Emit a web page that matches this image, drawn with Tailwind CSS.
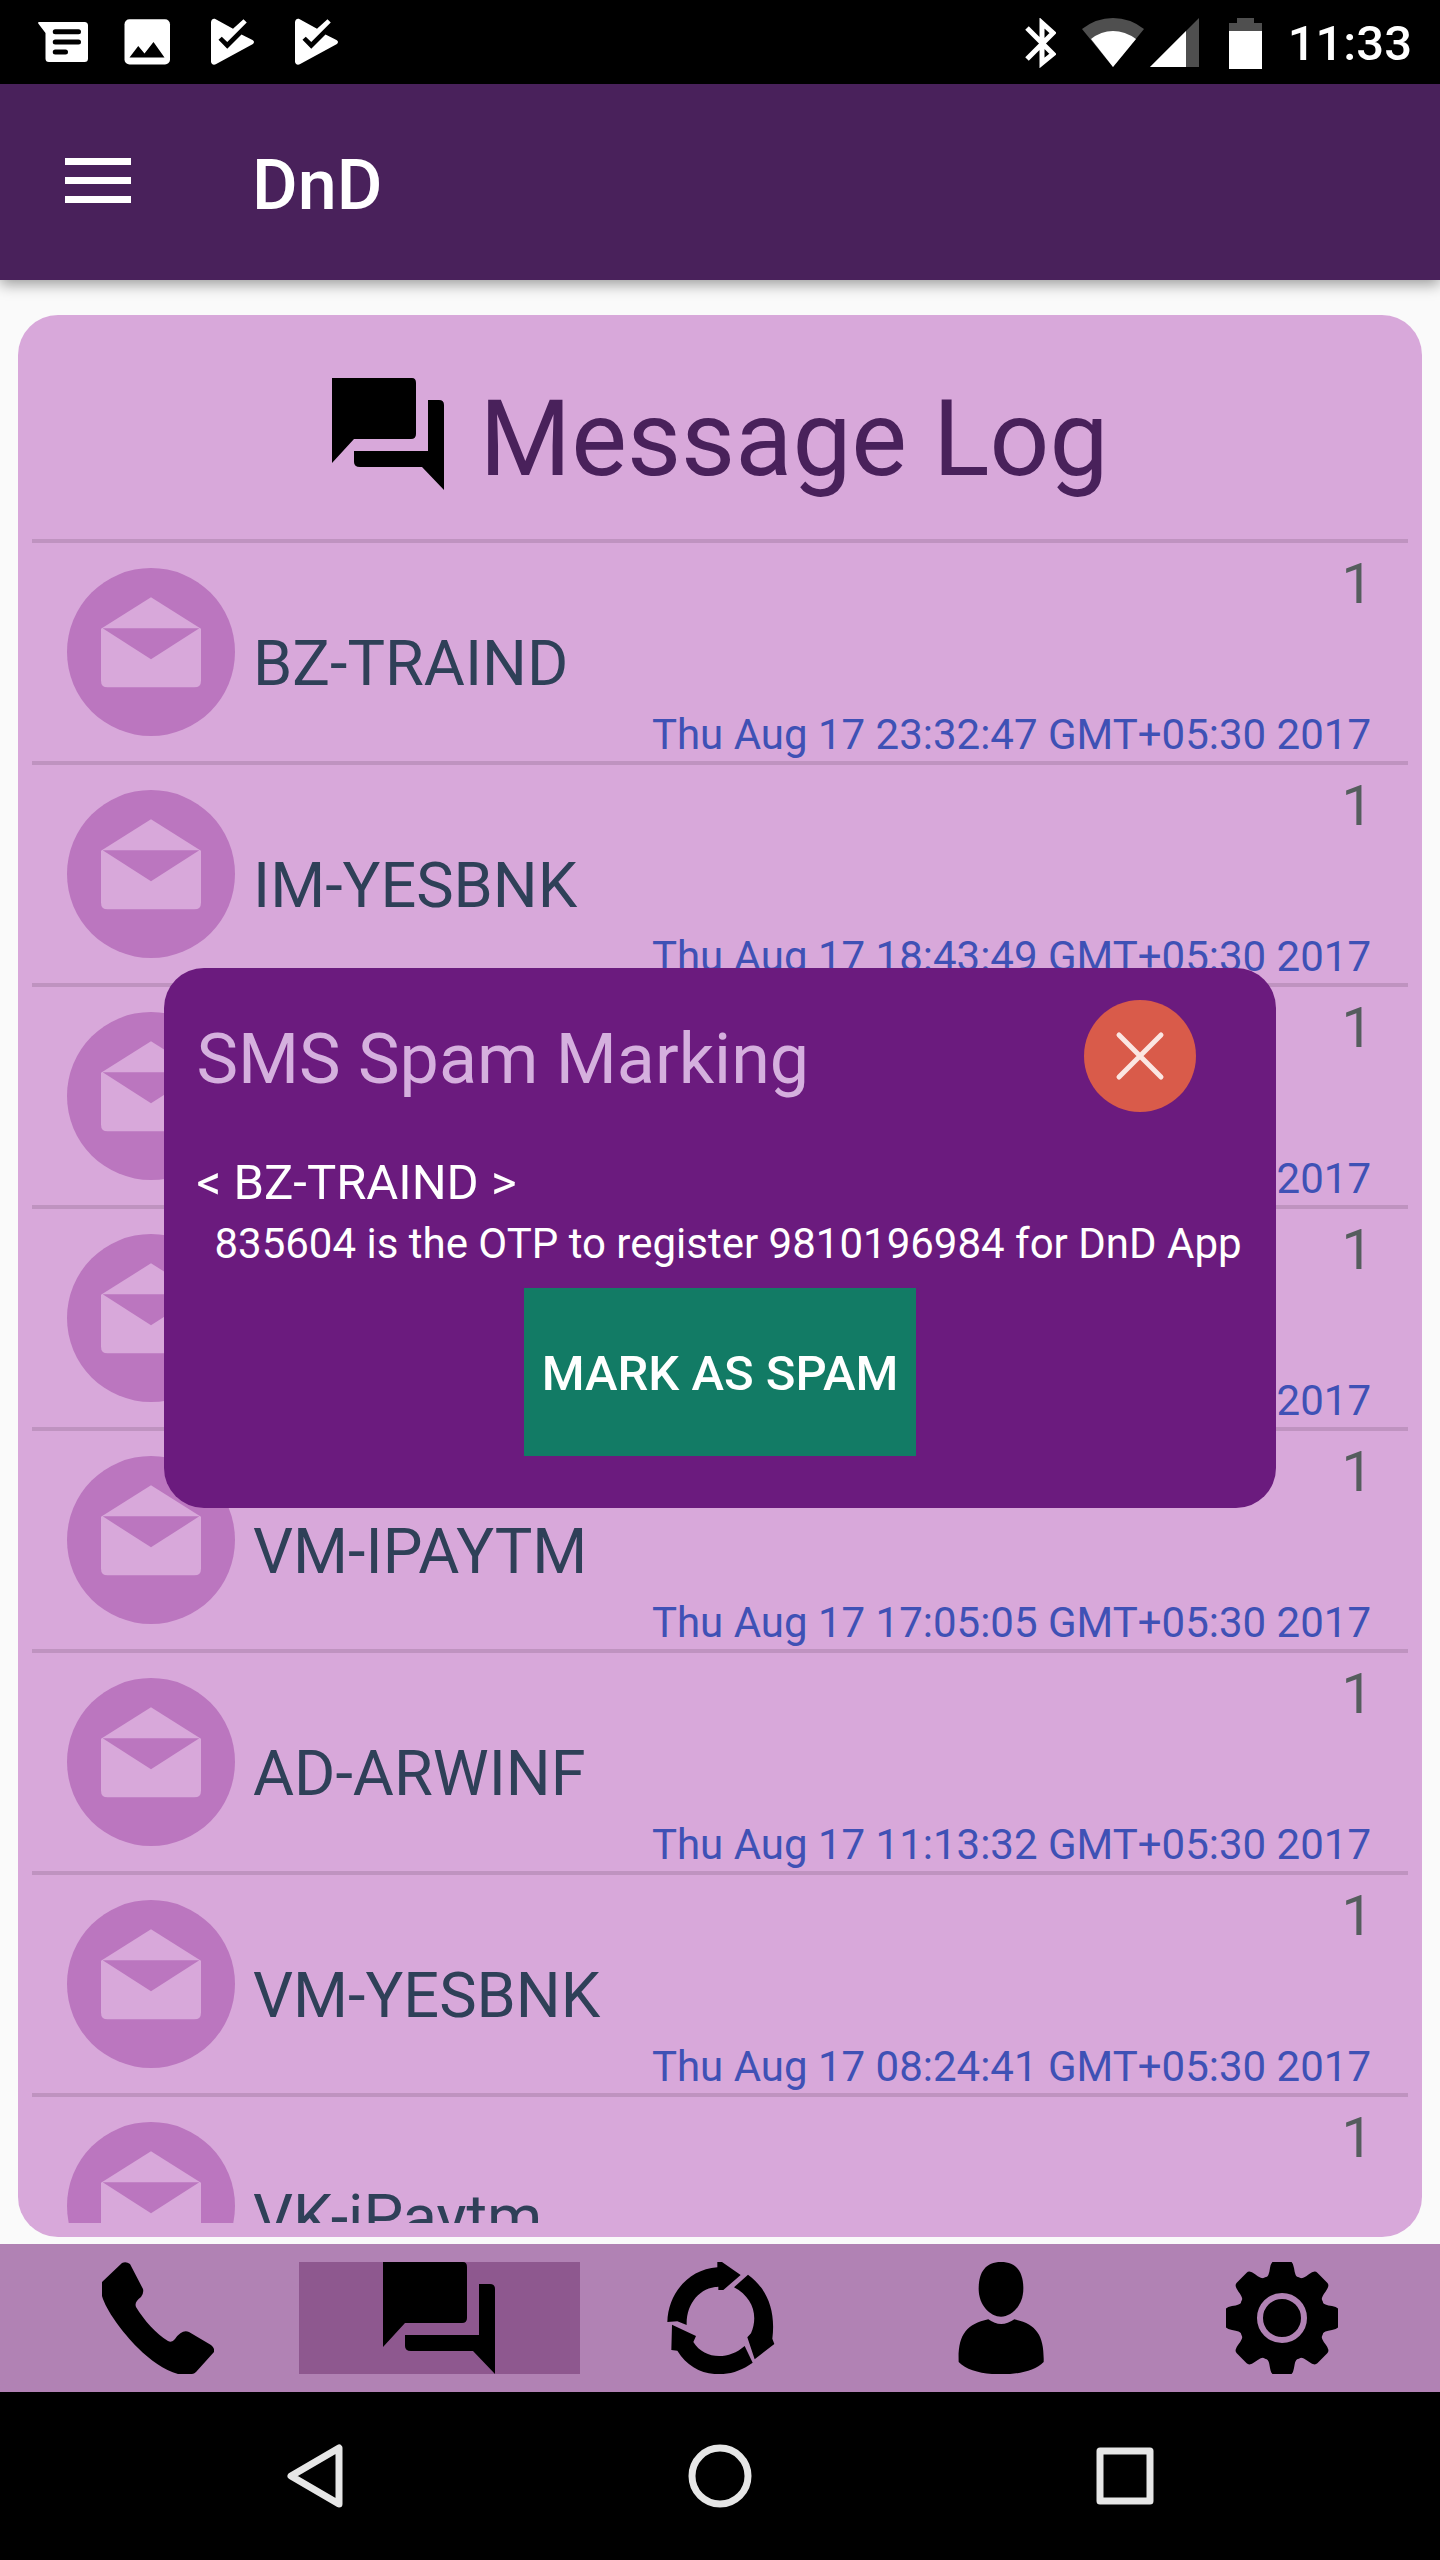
<!DOCTYPE html>
<html lang="en">
<head>
<meta charset="utf-8">
<meta name="viewport" content="width=device-width, initial-scale=1">
<title>DnD</title>
<script src="https://cdn.jsdelivr.net/npm/@tailwindcss/browser@4"></script>
</head>
<body class="flex h-screen flex-col overflow-hidden bg-[#fafafa] font-[Roboto,sans-serif]">

<!-- Shared icons -->
<svg class="hidden" aria-hidden="true">
  <symbol id="mail" viewBox="51 54 504 504">
    <circle cx="303" cy="306" r="252" fill="#bb76bf"/>
    <path d="M303 142L453 236V392Q453 412 433 412H173Q153 412 153 392V236Z" fill="#d8a8da"/>
    <path d="M158 235H448L303 328Z" fill="#bb76bf"/>
  </symbol>
  <symbol id="forum" viewBox="0 0 112 112">
    <path d="M0 0H80Q84 0 84 5V56Q84 61 79 61H22L0 85Z"/>
    <path d="M96 22H107Q112 22 112 27V112L90 89H28Q22 89 22 84V73H96Z"/>
  </symbol>
  <symbol id="play-check" viewBox="0 0 24 24">
    <path d="M4 4.2C4 3 5 2.4 5.9 2.9L12.8 6.7L17 2.9L18.3 4.2L10.5 12L8.3 9.9L7 11.1L10.5 14.7L16.2 9L20.6 11.2Q21.8 12 20.6 12.9L5.9 20.9C5 21.4 4 20.8 4 19.8Z"/>
  </symbol>
</svg>

<!-- Status bar -->
<header class="flex h-[84px] shrink-0 items-center justify-between bg-black pl-[33px] pr-[28px] text-white">
  <div class="flex items-center gap-6">
    <svg class="size-[60px]" viewBox="0 0 24 24" fill="currentColor"><path d="M2.3 4H20.6Q22 4 22 5.4V18.6Q22 20 20.6 20H6.4Q5 20 5 18.6V8.4L2.1 4.6Q1.9 4 2.3 4Z"/><path d="M8.9 7.9H18.2M8.9 12H18.2M8.9 16H13" stroke="#000" stroke-width="2" stroke-linecap="round"/></svg>
    <svg class="size-[60px]" viewBox="0 0 24 24" fill="currentColor"><rect x="3" y="2.9" width="18.2" height="18.1" rx="2"/><path d="M5 18.2L8.5 13.6L11 16.6L14.6 12L19 18.2Z" fill="#000"/></svg>
    <svg class="size-[60px]" fill="currentColor"><use href="#play-check"/></svg>
    <svg class="size-[60px]" fill="currentColor"><use href="#play-check"/></svg>
  </div>
  <div class="flex items-center pt-[2px]">
    <svg class="mr-[26px] h-[50px] w-[31px]" viewBox="0 0 31 50" fill="none" stroke="currentColor" stroke-width="5"><path d="M2 10L28 36L17 45V5L28 15L2 41"/></svg>
    <svg class="mr-[6px] h-[50px] w-[62px]" viewBox="0 0 62 50"><path d="M0 11Q14 0 31 0T62 11L31 49Z" fill="#4f4f4f"/><path d="M9 21Q19 13 31 13T54 21L31 49Z" fill="#fff"/></svg>
    <svg class="mr-[30px] h-[50px] w-[49px]" viewBox="0 0 49 50"><path d="M49 0V49H0Z" fill="#4f4f4f"/><path d="M36 13V49H0Z" fill="#fff"/></svg>
    <svg class="mr-[26px] h-[51px] w-[33px]" viewBox="0 0 33 51"><path d="M8 0H25V5H33V14H0V5H8Z" fill="#4f4f4f"/><path d="M0 13H33V51H0Z" fill="#fff"/></svg>
    <span class="text-[49px] leading-[57px] font-medium">11:33</span>
  </div>
</header>

<!-- App area -->
<div class="relative flex min-h-0 flex-1 flex-col">
  <div class="z-10 flex h-[196px] shrink-0 items-center bg-[#49215b] pl-[65px] text-white shadow-[0_4px_14px_rgba(0,0,0,0.4)]">
    <button type="button" aria-label="Open menu" class="mr-[121px] pb-[3px]">
      <svg class="h-[46px] w-[66px]" viewBox="0 0 66 46" fill="currentColor"><path d="M0 0H66V7H0ZM0 19H66V26H0ZM0 38H66V45H0Z"/></svg>
    </button>
    <h1 class="pt-[6px] text-[70px] leading-[82px] font-medium">DnD</h1>
  </div>

  <main class="mx-[18px] mt-[35px] mb-[7px] flex min-h-0 flex-1 flex-col rounded-[40px] bg-[#d8a8da] p-[14px]">
    <div class="flex shrink-0 items-start justify-center gap-[36px] border-b-4 border-[#bf93c0] pt-[49px] pb-[38px]">
      <svg class="size-[112px]"><use href="#forum"/></svg>
      <h2 class="text-[105px] leading-[123px] text-[#49215b]">Message Log</h2>
    </div>
    <ul class="min-h-0 flex-1 overflow-hidden text-[42px] leading-[49px]">
      <li class="flex items-center gap-[18px] border-b-4 border-[#bf93c0] px-[35px]">
        <svg class="size-[168px] shrink-0"><use href="#mail"/></svg>
        <div class="flex flex-1 flex-col gap-[9px] pt-2 pb-[2px]">
          <span class="self-end text-[56px] leading-[66px] text-[#555d5d]">1</span>
          <span class="text-[63px] leading-[75px] text-[#2f4058]">BZ-TRAIND</span>
          <time class="self-end pr-[2px] text-[#3f51b5]">Thu Aug 17 23:32:47 GMT+05:30 2017</time>
        </div>
      </li>
      <li class="flex items-center gap-[18px] border-b-4 border-[#bf93c0] px-[35px]">
        <svg class="size-[168px] shrink-0"><use href="#mail"/></svg>
        <div class="flex flex-1 flex-col gap-[9px] pt-2 pb-[2px]">
          <span class="self-end text-[56px] leading-[66px] text-[#555d5d]">1</span>
          <span class="text-[63px] leading-[75px] text-[#2f4058]">IM-YESBNK</span>
          <time class="self-end pr-[2px] text-[#3f51b5]">Thu Aug 17 18:43:49 GMT+05:30 2017</time>
        </div>
      </li>
      <li class="flex items-center gap-[18px] border-b-4 border-[#bf93c0] px-[35px]">
        <svg class="size-[168px] shrink-0"><use href="#mail"/></svg>
        <div class="flex flex-1 flex-col gap-[9px] pt-2 pb-[2px]">
          <span class="self-end text-[56px] leading-[66px] text-[#555d5d]">1</span>
          <span class="text-[63px] leading-[75px] text-[#2f4058]">VM-IPAYTM</span>
          <time class="self-end pr-[2px] text-[#3f51b5]">Thu Aug 17 17:43:49 GMT+05:30 2017</time>
        </div>
      </li>
      <li class="flex items-center gap-[18px] border-b-4 border-[#bf93c0] px-[35px]">
        <svg class="size-[168px] shrink-0"><use href="#mail"/></svg>
        <div class="flex flex-1 flex-col gap-[9px] pt-2 pb-[2px]">
          <span class="self-end text-[56px] leading-[66px] text-[#555d5d]">1</span>
          <span class="text-[63px] leading-[75px] text-[#2f4058]">VM-IPAYTM</span>
          <time class="self-end pr-[2px] text-[#3f51b5]">Thu Aug 17 17:10:05 GMT+05:30 2017</time>
        </div>
      </li>
      <li class="flex items-center gap-[18px] border-b-4 border-[#bf93c0] px-[35px]">
        <svg class="size-[168px] shrink-0"><use href="#mail"/></svg>
        <div class="flex flex-1 flex-col gap-[9px] pt-2 pb-[2px]">
          <span class="self-end text-[56px] leading-[66px] text-[#555d5d]">1</span>
          <span class="text-[63px] leading-[75px] text-[#2f4058]">VM-IPAYTM</span>
          <time class="self-end pr-[2px] text-[#3f51b5]">Thu Aug 17 17:05:05 GMT+05:30 2017</time>
        </div>
      </li>
      <li class="flex items-center gap-[18px] border-b-4 border-[#bf93c0] px-[35px]">
        <svg class="size-[168px] shrink-0"><use href="#mail"/></svg>
        <div class="flex flex-1 flex-col gap-[9px] pt-2 pb-[2px]">
          <span class="self-end text-[56px] leading-[66px] text-[#555d5d]">1</span>
          <span class="text-[63px] leading-[75px] text-[#2f4058]">AD-ARWINF</span>
          <time class="self-end pr-[2px] text-[#3f51b5]">Thu Aug 17 11:13:32 GMT+05:30 2017</time>
        </div>
      </li>
      <li class="flex items-center gap-[18px] border-b-4 border-[#bf93c0] px-[35px]">
        <svg class="size-[168px] shrink-0"><use href="#mail"/></svg>
        <div class="flex flex-1 flex-col gap-[9px] pt-2 pb-[2px]">
          <span class="self-end text-[56px] leading-[66px] text-[#555d5d]">1</span>
          <span class="text-[63px] leading-[75px] text-[#2f4058]">VM-YESBNK</span>
          <time class="self-end pr-[2px] text-[#3f51b5]">Thu Aug 17 08:24:41 GMT+05:30 2017</time>
        </div>
      </li>
      <li class="flex items-center gap-[18px] border-b-4 border-[#bf93c0] px-[35px]">
        <svg class="size-[168px] shrink-0"><use href="#mail"/></svg>
        <div class="flex flex-1 flex-col gap-[9px] pt-2 pb-[2px]">
          <span class="self-end text-[56px] leading-[66px] text-[#555d5d]">1</span>
          <span class="text-[63px] leading-[75px] text-[#2f4058]">VK-iPaytm</span>
          <time class="self-end pr-[2px] text-[#3f51b5]">Thu Aug 17 07:52:18 GMT+05:30 2017</time>
        </div>
      </li>
    </ul>
  </main>

  <!-- Tabs -->
  <nav class="grid shrink-0 grid-cols-5 bg-[#b182b4] p-[18px]" aria-label="Sections">
    <a href="#calls" aria-label="Calls" class="flex justify-center">
      <svg class="size-[112px]" viewBox="0 0 112 112"><path d="M0 20L20 1Q24 -1 28 2L41 27Q42 31 39 35Q32 40 34 45C42 58 54 72 66 79Q70 81 73 77Q80 67 87 70L109 83Q113 86 112 90L94 110Q92 112 90 112H76C62 108 48 98 36 86C20 70 4 48 0 34Z"/></svg>
    </a>
    <a href="#messages" aria-label="Messages" aria-current="page" class="flex justify-center bg-[#8e588f]">
      <svg class="size-[112px]"><use href="#forum"/></svg>
    </a>
    <a href="#sync" aria-label="Sync" class="flex justify-center">
      <svg class="size-[112px]" viewBox="72 66 336 336">
        <path d="M82 246C84 160 146 88 232 82V66H246L302 105L250 150H235V140C180 142 138 190 140 255L112 244Z"/>
        <path d="M324 104C380 144 408 210 397 296L403 312L344 358L322 292L333 280C356 226 338 172 282 142Z"/>
        <path d="M96 254L168 288L160 306C192 358 264 362 314 318L338 368C262 424 160 412 112 332L94 330Z"/>
      </svg>
    </a>
    <a href="#profile" aria-label="Profile" class="flex justify-center">
      <svg class="size-[112px]" viewBox="918 66 336 336">
        <path d="M1086 66C1132 66 1153 96 1153 146C1153 196 1118 230 1086 230S1019 196 1019 146C1019 96 1040 66 1086 66Z"/>
        <path d="M1048 238Q1086 266 1126 238C1194 252 1216 288 1214 366C1188 392 1140 403 1086 403S984 392 959 366C956 288 980 252 1048 238Z"/>
      </svg>
    </a>
    <a href="#settings" aria-label="Settings" class="flex justify-center">
      <svg class="size-[112px]" viewBox="0 0 112 112">
        <circle cx="56" cy="56" r="44"/>
        <path id="tooth" d="M40 16Q43 14 44 6Q45 -1 49 -1H63Q67 -1 68 6Q69 14 72 16Z"/>
        <use href="#tooth" transform="rotate(45 56 56)"/>
        <use href="#tooth" transform="rotate(90 56 56)"/>
        <use href="#tooth" transform="rotate(135 56 56)"/>
        <use href="#tooth" transform="rotate(180 56 56)"/>
        <use href="#tooth" transform="rotate(225 56 56)"/>
        <use href="#tooth" transform="rotate(270 56 56)"/>
        <use href="#tooth" transform="rotate(315 56 56)"/>
        <circle cx="56" cy="56" r="22" fill="none" stroke="#b182b4" stroke-width="6"/>
      </svg>
    </a>
  </nav>

  <!-- Spam dialog, centred over the app -->
  <div class="pointer-events-none absolute inset-0 z-20 flex items-center justify-center">
    <section role="dialog" aria-labelledby="dialog-title" class="pointer-events-auto rounded-[40px] bg-[#6b1b7e] px-8 pt-8 pb-[52px] text-white">
      <div class="flex items-center justify-between pr-12">
        <h2 id="dialog-title" class="pt-[6px] text-[70px] leading-[82px] text-[#d5b0de]">SMS Spam Marking</h2>
        <button type="button" aria-label="Close">
          <svg class="size-[112px]" viewBox="0 0 112 112"><circle cx="56" cy="56" r="56" fill="#d95b4a"/><path d="M35 35L77 77M77 35L35 77" stroke="#fbe6e2" stroke-width="5" stroke-linecap="round"/></svg>
        </button>
      </div>
      <p class="mt-[42px] text-[49px] leading-[57px]">&lt; BZ-TRAIND &gt;</p>
      <p class="mt-2 pl-[18px] pr-[2px] text-[42px] leading-[49px]">835604 is the OTP to register 9810196984 for DnD App</p>
      <button type="button" class="mx-auto mt-5 block h-[168px] bg-[#127b65] px-[18px] pt-[2px] text-[49px] leading-[57px] font-medium">MARK AS SPAM</button>
    </section>
  </div>
</div>

<!-- System navigation -->
<footer class="flex h-[168px] shrink-0 items-center justify-center gap-[341px] bg-black text-[#e6e6e6]">
  <button type="button" aria-label="Back"><svg class="size-16" viewBox="0 0 64 64" fill="none" stroke="currentColor" stroke-width="7" stroke-linejoin="round"><path d="M56 4V60L8 32Z"/></svg></button>
  <button type="button" aria-label="Home"><svg class="size-16" viewBox="0 0 64 64" fill="none" stroke="currentColor" stroke-width="7"><circle cx="32" cy="32" r="28"/></svg></button>
  <button type="button" aria-label="Recent apps"><svg class="size-16" viewBox="0 0 64 64" fill="none" stroke="currentColor" stroke-width="7" stroke-linejoin="round"><rect x="7" y="7" width="50" height="50"/></svg></button>
</footer>
</body>
</html>
